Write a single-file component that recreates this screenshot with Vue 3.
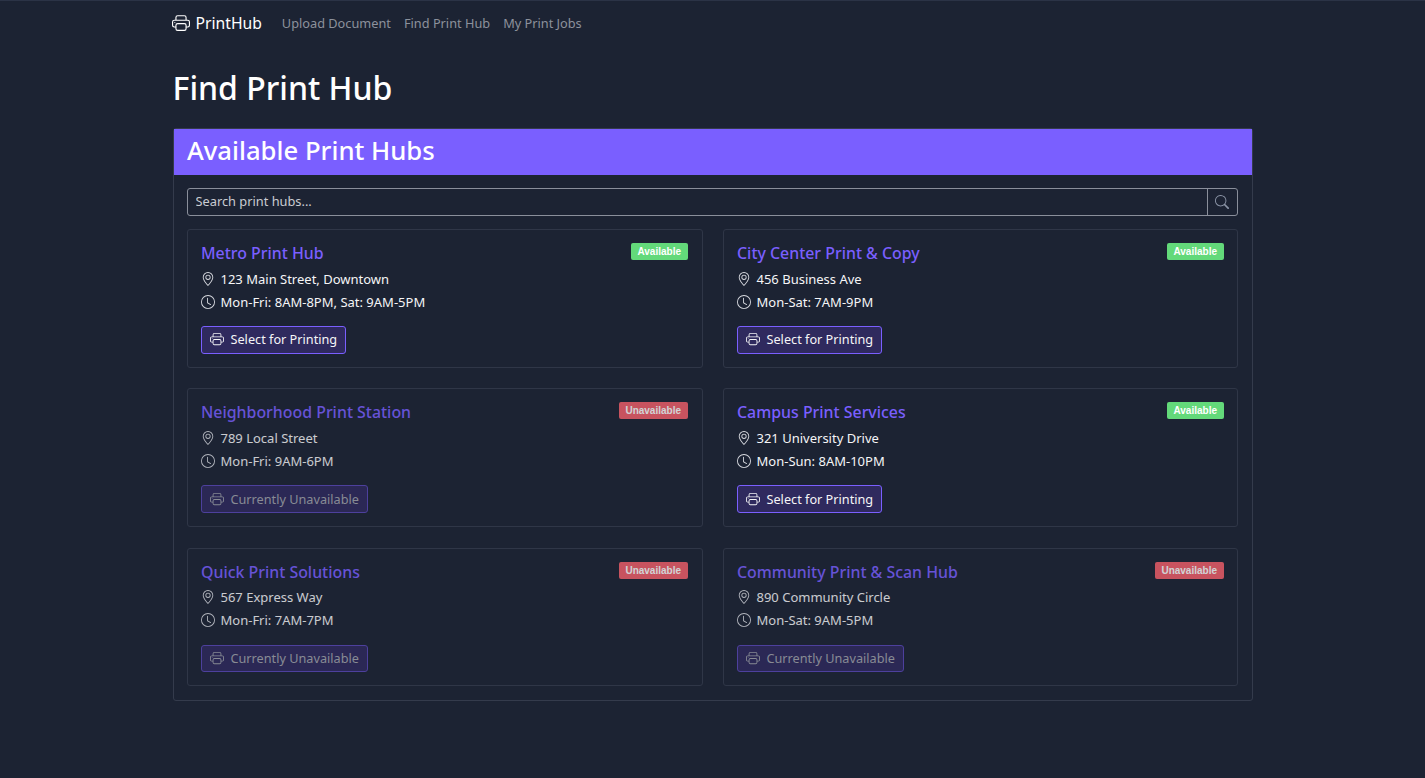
<script setup>
const hubs = [
  { name: 'Metro Print Hub', address: '123 Main Street, Downtown', hours: 'Mon-Fri: 8AM-8PM, Sat: 9AM-5PM', open: true },
  { name: 'City Center Print & Copy', address: '456 Business Ave', hours: 'Mon-Sat: 7AM-9PM', open: true },
  { name: 'Neighborhood Print Station', address: '789 Local Street', hours: 'Mon-Fri: 9AM-6PM', open: false },
  { name: 'Campus Print Services', address: '321 University Drive', hours: 'Mon-Sun: 8AM-10PM', open: true },
  { name: 'Quick Print Solutions', address: '567 Express Way', hours: 'Mon-Fri: 7AM-7PM', open: false },
  { name: 'Community Print & Scan Hub', address: '890 Community Circle', hours: 'Mon-Sat: 9AM-5PM', open: false },
]
const printerA = 'M2.5 8a.5.5 0 1 0 0-1 .5.5 0 0 0 0 1'
const printerB = 'M5 1a2 2 0 0 0-2 2v2H2a2 2 0 0 0-2 2v3a2 2 0 0 0 2 2h1v1a2 2 0 0 0 2 2h6a2 2 0 0 0 2-2v-1h1a2 2 0 0 0 2-2V7a2 2 0 0 0-2-2h-1V3a2 2 0 0 0-2-2zM4 3a1 1 0 0 1 1-1h6a1 1 0 0 1 1 1v2H4zm1 5a2 2 0 0 0-2 2v1H2a1 1 0 0 1-1-1V7a1 1 0 0 1 1-1h12a1 1 0 0 1 1 1v3a1 1 0 0 1-1 1h-1v-1a2 2 0 0 0-2-2zm7 2v3a1 1 0 0 1-1 1H5a1 1 0 0 1-1-1v-3a1 1 0 0 1 1-1h6a1 1 0 0 1 1 1'
</script>

<template>
  <div class="page">
    <nav class="nav">
      <a class="brand">
        <svg class="brand-icon" viewBox="0 0 16 16" fill="currentColor"><path :d="printerA" /><path :d="printerB" /></svg>
        PrintHub
      </a>
      <a class="nav-link">Upload Document</a>
      <a class="nav-link">Find Print Hub</a>
      <a class="nav-link">My Print Jobs</a>
    </nav>

    <h1 class="title">Find Print Hub</h1>

    <section class="panel">
      <header class="panel-head">
        <h2>Available Print Hubs</h2>
      </header>
      <div class="panel-body">
        <div class="search">
          <input type="text" placeholder="Search print hubs..." />
          <button class="search-btn" type="button">
            <svg viewBox="0 0 16 16" fill="currentColor"><path d="M11.742 10.344a6.5 6.5 0 1 0-1.397 1.398h-.001q.044.06.098.115l3.85 3.85a1 1 0 0 0 1.415-1.414l-3.85-3.85a1 1 0 0 0-.115-.1zM12 6.5a5.5 5.5 0 1 1-11 0 5.5 5.5 0 0 1 11 0" /></svg>
          </button>
        </div>

        <div class="grid">
          <article v-for="hub in hubs" :key="hub.name" class="card">
            <div class="card-inner" :class="{ off: !hub.open }">
              <div class="card-top">
                <h3>{{ hub.name }}</h3>
                <span class="badge" :class="hub.open ? 'yes' : 'no'">{{ hub.open ? 'Available' : 'Unavailable' }}</span>
              </div>
              <p class="line">
                <svg viewBox="0 0 16 16" fill="currentColor"><path d="M12.166 8.94c-.524 1.062-1.234 2.12-1.96 3.07A32 32 0 0 1 8 14.58a32 32 0 0 1-2.206-2.57c-.726-.95-1.436-2.008-1.96-3.07C3.304 7.867 3 6.862 3 6a5 5 0 0 1 10 0c0 .862-.305 1.867-.834 2.94M8 16s6-5.686 6-10A6 6 0 0 0 2 6c0 4.314 6 10 6 10" /><path d="M8 8a2 2 0 1 1 0-4 2 2 0 0 1 0 4m0 1a3 3 0 1 0 0-6 3 3 0 0 0 0 6" /></svg>
                {{ hub.address }}
              </p>
              <p class="line">
                <svg viewBox="0 0 16 16" fill="currentColor"><path d="M8 3.5a.5.5 0 0 0-1 0V9a.5.5 0 0 0 .252.434l3.5 2a.5.5 0 0 0 .496-.868L8 8.71z" /><path d="M8 16A8 8 0 1 0 8 0a8 8 0 0 0 0 16m7-8A7 7 0 1 1 1 8a7 7 0 0 1 14 0" /></svg>
                {{ hub.hours }}
              </p>
              <button class="select" type="button">
                <svg viewBox="0 0 16 16" fill="currentColor"><path :d="printerA" /><path :d="printerB" /></svg>
                {{ hub.open ? 'Select for Printing' : 'Currently Unavailable' }}
              </button>
            </div>
          </article>
        </div>
      </div>
    </section>
  </div>
</template>

<style>
html, body {
  background: #1c2333;
}
</style>

<style scoped>
.page {
  min-height: 778px;
  box-sizing: border-box;
  border-top: 1px solid #2b3346;
  font-family: "Noto Sans", "Liberation Sans", sans-serif;
  font-size: 13px;
  color: #f5f5f7;
}

.nav {
  width: 1080px;
  margin: 0 auto;
  height: 44px;
  display: flex;
  align-items: center;
  gap: 13px;
}

.brand {
  display: flex;
  align-items: center;
  gap: 6px;
  margin-left: -1px;
  margin-right: 7px;
  font-size: 15.7px;
  color: #fff;
}

.brand-icon {
  width: 18px;
  height: 18px;
}

.nav-link {
  font-size: 12.75px;
  color: #8c919c;
}

.title {
  width: 1080px;
  margin: 24px auto 21px;
  font-size: 32px;
  line-height: 38px;
  font-weight: 500;
  color: #fff;
}

.panel {
  width: 1080px;
  margin: 0 auto;
  box-sizing: border-box;
  border: 1px solid #343b4c;
  border-radius: 3px;
}

.panel-head {
  height: 46px;
  padding: 0 13.5px 3px;
  box-sizing: border-box;
  display: flex;
  align-items: center;
  background: #7a5fff;
}

.panel-head h2 {
  margin: 0;
  font-size: 25.7px;
  font-weight: 500;
  color: #fff;
}

.panel-body {
  padding: 13px 14px 14px 13px;
}

.search {
  display: flex;
  height: 27.5px;
  margin-bottom: 13.5px;
  box-sizing: border-box;
  border: 1px solid #8a8f9b;
  border-radius: 3px;
}

.search input {
  flex: 1;
  min-width: 0;
  padding: 0 8px 2px;
  border: none;
  outline: none;
  background: transparent;
  font: inherit;
  font-size: 12.8px;
  color: #fff;
}

.search input::placeholder {
  color: #c9ccd2;
  opacity: 1;
}

.search-btn {
  width: 30px;
  padding: 0;
  display: flex;
  align-items: center;
  justify-content: center;
  border: none;
  border-left: 1px solid #8a8f9b;
  background: transparent;
  color: #8a93a5;
}

.search-btn svg {
  width: 14px;
  height: 14px;
}

.grid {
  display: grid;
  grid-template-columns: 516px 515px;
  gap: 20.8px 20px;
}

.card {
  height: 138.6px;
  box-sizing: border-box;
  border: 1px solid #2f3647;
  border-radius: 3px;
}

.card-inner {
  padding: 13px;
}

.card:nth-child(odd) .card-inner {
  padding-right: 14px;
}

.card-inner.off {
  opacity: 0.8;
}

.card-top {
  display: flex;
  justify-content: space-between;
  align-items: flex-start;
  margin-bottom: 3px;
}

.card-top h3 {
  margin: 0 0 0 0.5px;
  font-size: 15.9px;
  line-height: 21px;
  font-weight: 500;
  color: #7a5fff;
}

.badge {
  padding: 2px 6.5px;
  border-radius: 2px;
  font-family: "Liberation Sans", sans-serif;
  font-size: 10px;
  line-height: 13px;
  font-weight: 700;
  color: #fff;
}

.badge.yes {
  background: #63d97a;
}

.badge.no {
  background: #f4606a;
}

.line {
  display: flex;
  align-items: center;
  gap: 6px;
  height: 23px;
  margin: 0;
  color: #f5f5f7;
}

.line svg {
  width: 14px;
  height: 14px;
  color: #d8dae0;
}

.select {
  display: flex;
  align-items: center;
  gap: 7px;
  height: 27.5px;
  margin-top: 13px;
  padding: 0 8px 1px;
  box-sizing: border-box;
  border: 1px solid #7a5fff;
  border-radius: 3px;
  background: #2f2a5e;
  font: inherit;
  font-size: 12.7px;
  color: #f5f5f7;
}

.off .select {
  border-color: #5a48b8;
  color: #a3a5ad;
}

.select svg {
  width: 14px;
  height: 14px;
}
</style>
